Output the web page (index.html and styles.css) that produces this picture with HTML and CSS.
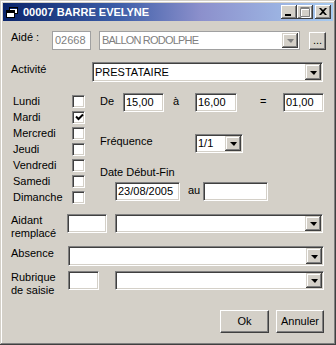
FILE: index.html
```html
<!DOCTYPE html>
<html>
<head>
<meta charset="utf-8">
<link rel="stylesheet" href="styles.css">
</head>
<body>
<div class="window">
  <div class="titlebar">
    <svg class="ticon" width="12" height="11" viewBox="0 0 12 11">
      <rect x="3.5" y="0.5" width="8" height="6" fill="#fff" stroke="#000"/>
      <rect x="4" y="1" width="7" height="1" fill="#0a246a"/>
      <rect x="0.5" y="3.5" width="8" height="7" fill="#fff" stroke="#000"/>
      <rect x="1" y="4" width="7" height="2" fill="#000"/>
    </svg>
    <span class="title">00007 BARRE EVELYNE</span>
    <div class="tbtns">
      <span class="tbtn"><svg width="16" height="14" viewBox="0 0 16 14"><rect x="4" y="9" width="6" height="2" fill="#000"/></svg></span>
      <span class="tbtn"><svg width="16" height="14" viewBox="0 0 16 14"><path d="M4.5 4.5h9v8h-9z M4.5 3.5h9" fill="none" stroke="#fff"/><path d="M3.5 3.5h9v8h-9z M3.5 2.5h9" fill="none" stroke="#808080"/></svg></span>
      <span class="tbtn close"><svg width="16" height="14" viewBox="0 0 16 14"><path d="M4 3l2 0 2 2 2-2 2 0-3 3.5 3 3.5-2 0-2-2-2 2-2 0 3-3.5z" fill="#000"/></svg></span>
    </div>
  </div>

  <div class="form">
    <div class="row r-aide">
      <span class="lbl w-aide">Aidé :</span>
      <span class="field dis f-code">02668</span>
      <span class="field combo dis c-aide"><span class="val narrow">BALLON RODOLPHE</span><span class="drop"><i class="arrow"></i></span></span>
      <span class="pbtn dots">...</span>
    </div>

    <div class="row r-act">
      <span class="lbl w-act">Activité</span>
      <span class="field combo c-act"><span class="val">PRESTATAIRE</span><span class="drop"><i class="arrow"></i></span></span>
    </div>

    <div class="middle">
      <div class="days">
        <div class="day"><span class="dlbl">Lundi</span><span class="check"></span></div>
        <div class="day"><span class="dlbl">Mardi</span><span class="check"><svg width="9" height="9" viewBox="0 0 9 9"><path d="M1 3.5l2.5 2.5 4.5-4.5" fill="none" stroke="#000" stroke-width="2"/></svg></span></div>
        <div class="day"><span class="dlbl">Mercredi</span><span class="check"></span></div>
        <div class="day"><span class="dlbl">Jeudi</span><span class="check"></span></div>
        <div class="day"><span class="dlbl">Vendredi</span><span class="check"></span></div>
        <div class="day"><span class="dlbl">Samedi</span><span class="check"></span></div>
        <div class="day"><span class="dlbl">Dimanche</span><span class="check"></span></div>
      </div>
      <div class="right">
        <div class="row r-hours">
          <span class="lbl top w-de">De</span>
          <span class="field f-h1">15,00</span>
          <span class="lbl top w-a">à</span>
          <span class="field f-h2">16,00</span>
          <span class="lbl top w-eq">=</span>
          <span class="field f-h3">01,00</span>
        </div>
        <div class="row r-freq">
          <span class="lbl top1 w-freq">Fréquence</span>
          <span class="field combo c-freq"><span class="val">1/1</span><span class="drop"><i class="arrow"></i></span></span>
        </div>
        <div class="datelbl">Date Début-Fin</div>
        <div class="row r-date">
          <span class="field f-d1">23/08/2005</span>
          <span class="lbl top w-au">au</span>
          <span class="field f-d2"></span>
        </div>
      </div>
    </div>

    <div class="row r-remp">
      <span class="lbl two w-remp">Aidant<br>remplacé</span>
      <span class="field f-remp"></span>
      <span class="field combo c-remp"><span class="val"></span><span class="drop"><i class="arrow"></i></span></span>
    </div>

    <div class="row r-abs">
      <span class="lbl top1 w-abs">Absence</span>
      <span class="field combo c-abs"><span class="val"></span><span class="drop"><i class="arrow"></i></span></span>
    </div>

    <div class="row r-rub">
      <span class="lbl two w-abs">Rubrique<br>de saisie</span>
      <span class="field f-rub"></span>
      <span class="field combo c-rub"><span class="val"></span><span class="drop"><i class="arrow"></i></span></span>
    </div>

    <div class="actions">
      <span class="pbtn b-ok">Ok</span>
      <span class="pbtn b-cancel">Annuler</span>
    </div>
  </div>
</div>
</body>
</html>
```

FILE: styles.css
```css
* { box-sizing: border-box; margin: 0; padding: 0; }
body {
  margin: 0;
  width: 336px;
  height: 345px;
  overflow: hidden;
  background: #d4d0c8;
  font-family: "Liberation Sans", Arial, sans-serif;
  font-size: 11px;
  color: #000;
}
.window {
  width: 336px;
  height: 345px;
  padding: 3px;
  background: #d4d0c8;
  box-shadow: inset -1px -1px #404040, inset 1px 1px #d4d0c8, inset -2px -2px #808080, inset 2px 2px #fff;
}
.titlebar {
  height: 18px;
  display: flex;
  align-items: center;
  padding-left: 3px;
  padding-right: 2px;
  background: linear-gradient(to right, #0a246a 0%, #3d5ea8 35%, #8c90cc 60%, #a6caf0 100%);
  color: #fff;
  font-weight: bold;
}
.ticon { flex: none; margin-right: 5px; }
.title { flex: 1; white-space: nowrap; line-height: 13px; }
.tbtns { display: flex; }
.tbtn {
  width: 16px;
  height: 14px;
  display: block;
  background: #d4d0c8;
  box-shadow: inset -1px -1px #404040, inset 1px 1px #fff, inset -2px -2px #808080, inset 2px 2px #d4d0c8;
}
.tbtn svg { display: block; }
.tbtn.close { margin-left: 2px; }

.form { padding: 10px 9px 0 8px; }
.row { display: flex; align-items: flex-start; }
.lbl { line-height: 13px; white-space: nowrap; flex: none; }
.lbl.top { margin-top: 2px; }
.lbl.top1 { margin-top: 1px; }

.field {
  flex: none;
  height: 19px;
  padding: 1px 1px 1px 2px;
  display: flex;
  align-items: center;
  background: #fff;
  border: 1px solid;
  border-color: #808080 #fff #fff #808080;
  box-shadow: inset 1px 1px #404040, inset -1px -1px #d4d0c8;
  white-space: nowrap;
  overflow: hidden;
  line-height: 13px;
}
.field.dis {
  color: #808080;
  border-color: #a0a0a0;
  box-shadow: none;
}
.combo { padding-left: 1px; }
.combo .val { flex: 1; padding-left: 1px; overflow: hidden; }
.narrow { letter-spacing: -0.8px; }
.drop {
  flex: none;
  width: 16px;
  height: 100%;
  display: flex;
  align-items: center;
  justify-content: center;
  background: #d4d0c8;
  box-shadow: inset -1px -1px #404040, inset 1px 1px #d4d0c8, inset -2px -2px #808080, inset 2px 2px #fff;
}
.arrow {
  width: 0;
  height: 0;
  border-left: 4px solid transparent;
  border-right: 3px solid transparent;
  border-top: 4px solid #000;
  margin-top: 1px;
}
.dis .arrow { border-top-color: #808080; }

.pbtn {
  flex: none;
  display: flex;
  align-items: center;
  justify-content: center;
  background: #d4d0c8;
  border: 1px solid;
  border-color: #fff #404040 #404040 #fff;
  box-shadow: inset -1px -1px #808080;
  line-height: 13px;
}

/* row 1 */
.r-aide { margin-top: 0; }
.w-aide { width: 41px; }
.f-code { width: 39px; height: 19px; }
.c-aide { width: 201px; margin-left: 8px; }
.dots { width: 17px; height: 18px; margin-left: 9px; margin-top: 1px; align-items: flex-end; padding-bottom: 2px; }

/* row 2 */
.r-act { margin-top: 12px; }
.w-act { width: 81px; margin-top: 1px; }
.c-act { width: 231px; height: 20px; }

/* middle */
.middle { display: flex; margin-top: 11px; }
.days { width: 77px; flex: none; }
.day { height: 16px; display: flex; align-items: center; }
.dlbl { width: 61px; padding-left: 2px; line-height: 13px; }
.check {
  width: 13px;
  height: 13px;
  background: #fff;
  border: 1px solid;
  border-color: #808080 #fff #fff #808080;
  box-shadow: inset 1px 1px #404040, inset -1px -1px #d4d0c8;
  display: flex;
  align-items: center;
  justify-content: center;
}
.check svg { display: block; margin-left: 1px; margin-top: 1px; }
.right { margin-left: 12px; }
.w-de { width: 23px; }
.f-h1 { width: 41px; }
.w-a { width: 22px; margin-left: 9px; }
.f-h2 { width: 42px; }
.w-eq { width: 23px; margin-left: 23px; }
.f-h3 { width: 41px; }
.r-freq { margin-top: 22px; }
.w-freq { width: 95px; }
.c-freq { width: 48px; }
.datelbl { margin-top: 13px; line-height: 13px; white-space: nowrap; }
.r-date { margin-top: 3px; padding-left: 15px; }
.f-d1 { width: 65px; }
.w-au { width: 15px; margin-left: 8px; }
.f-d2 { width: 65px; }

/* lower rows */
.r-remp { margin-top: 9px; }
.w-remp { width: 56px; }
.f-remp { width: 40px; }
.c-remp { width: 208px; margin-left: 8px; }
.r-abs { margin-top: 6px; }
.w-abs { width: 57px; }
.c-abs { width: 256px; height: 20px; }
.r-rub { margin-top: 5px; }
.f-rub { width: 31px; }
.c-rub { width: 209px; margin-left: 16px; }

.actions { display: flex; justify-content: flex-end; gap: 7px; margin-top: 13px; }
.b-ok { width: 49px; height: 23px; }
.b-cancel { width: 48px; height: 23px; }
```
